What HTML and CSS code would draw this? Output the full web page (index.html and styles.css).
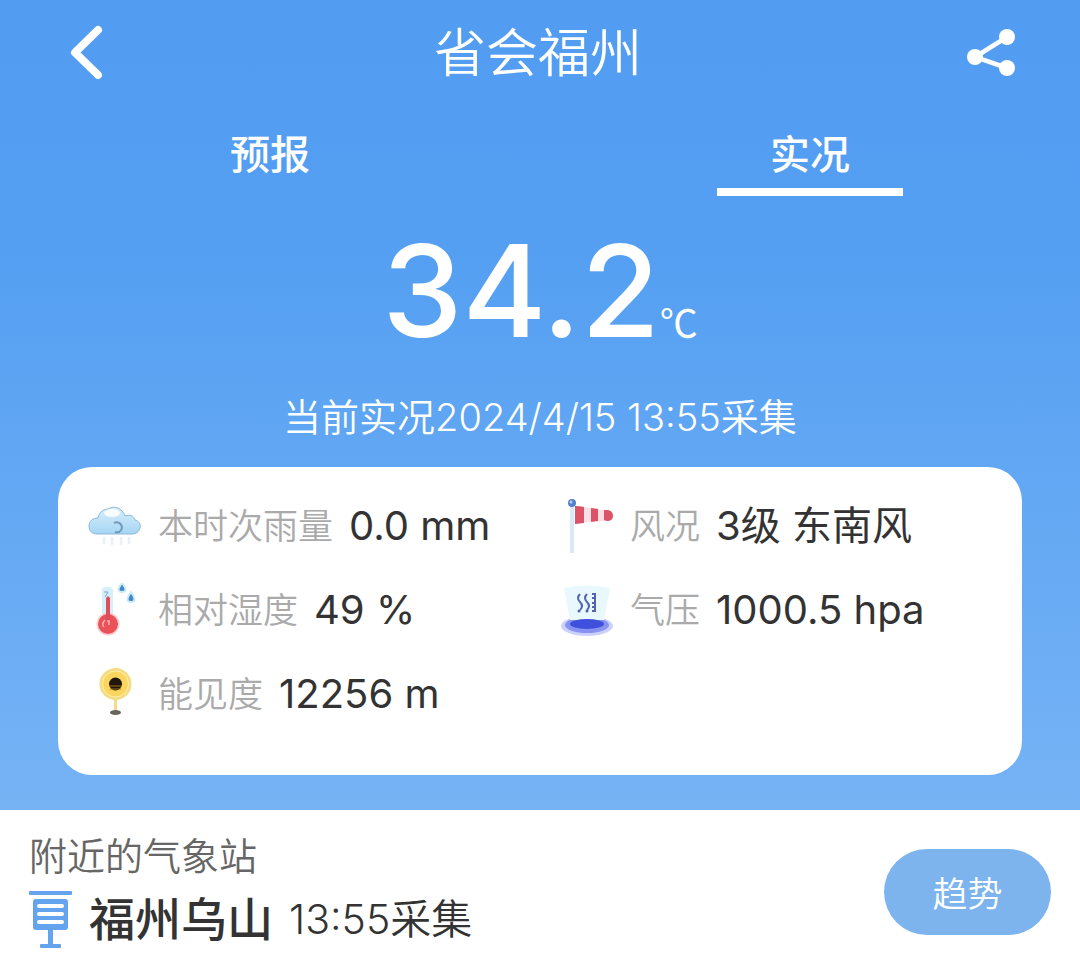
FILE: index.html
```html
<!DOCTYPE html>
<html lang="zh-CN">
<head>
<meta charset="utf-8">
<meta name="viewport" content="width=device-width, initial-scale=1">
<title>省会福州</title>
<link rel="stylesheet" href="styles.css">
</head>
<body>
<main class="live">
  <header class="topbar">
    <button class="icon-button" type="button" aria-label="返回">
      <svg width="48" height="64" viewBox="0 0 48 64" fill="none" stroke="#fff" stroke-width="8" stroke-linecap="round" stroke-linejoin="round"><path d="M36 10 13 32.500 36 55"/></svg>
    </button>
    <h1 class="title">省会福州</h1>
    <button class="icon-button" type="button" aria-label="分享">
      <svg width="52" height="52" viewBox="0 0 52 52" fill="#fff"><path d="M41 11 9 31 41 42" fill="none" stroke="#fff" stroke-width="4.500"/><circle cx="41" cy="11" r="8"/><circle cx="9" cy="31" r="8"/><circle cx="41" cy="42" r="8"/></svg>
    </button>
  </header>
  <nav class="tabs">
    <a class="tab" href="#forecast">预报</a>
    <a class="tab tab-active" href="#live" aria-current="page">实况</a>
  </nav>
  <p class="temperature"><span class="degrees">34.2</span><span class="unit">℃</span></p>
  <p class="collected">当前实况2024/4/15 13:55采集</p>
  <dl class="card">
    <div class="metric">
      <svg class="metric-icon" viewBox="0 0 54 54" width="54" height="54">
        <defs><linearGradient id="cloud" x1="0" y1="0" x2="0" y2="1"><stop offset="0" stop-color="#d9effb"/><stop offset="1" stop-color="#a5d5f4"/></linearGradient></defs>
        <path d="M9 35c-5 0-8-3-8-8 0-5 4-8 9-8 1-6 6-9 10-9 7-4 14-1 17 7 5-2 9 0 10 4 4 1 6 4 5 8-1 4-4 6-8 6z" fill="url(#cloud)" stroke="#8fb8d5" stroke-width="1"/>
        <ellipse cx="24" cy="14" rx="8" ry="4" fill="#fff" opacity=".85"/>
        <path d="M26 24c3-2 8 0 8 5-1 4-4 5-7 4" fill="none" stroke="#7599b9" stroke-width="2"/>
        <path d="M16 38v7M24 38v8M33 38v8M41 38v7" stroke="#e7f2f8" stroke-width="2.500"/>
      </svg>
      <dt>本时次雨量</dt><dd>0.0 mm</dd>
    </div>
    <div class="metric">
      <svg class="metric-icon" viewBox="0 0 54 54" width="54" height="54">
        <path d="M10 6h4v48h-4z" fill="#dce8f7"/>
        <path d="M15 7q20 2 33 5 5 1 5 5t-6 5q-18 0-32 3z" fill="#f9e0e5"/>
        <path d="M15 7q5 0 9 1v16l-9 1zM31 9l7 1v12l-7 1zM44 11h4q5 1 5 6t-6 5l-3-1z" fill="#dc5267"/>
        <circle cx="12" cy="4" r="4" fill="#5482c8"/><circle cx="11" cy="3" r="1.500" fill="#b8d6f6"/>
      </svg>
      <dt>风况</dt><dd>3级 东南风</dd>
    </div>
    <div class="metric">
      <svg class="metric-icon" viewBox="0 0 54 54" width="54" height="54">
        <path d="M14 34V8q0-4 4-4h3q4 0 4 4v26z" fill="#d5effb"/>
        <path d="M16 9h4l-3 5" fill="none" stroke="#7da9cb" stroke-width="1"/>
        <circle cx="20" cy="41" r="11.500" fill="#fbd2d3"/><circle cx="20" cy="41" r="10" fill="#ea5158"/>
        <path d="M18 39V15l2-2 2 2v24z" fill="#dd4d5c"/>
        <path d="M17 37q-4 4-1 7M19 38h2v4" fill="none" stroke="#ffb0a8" stroke-width="1.500"/>
        <path d="M34 0q7 9 0 9t0-9zM43 9q7 10 0 10t0-10z" fill="#4189c9" stroke="#cceafa" stroke-width="2"/>
      </svg>
      <dt>相对湿度</dt><dd>49 %</dd>
    </div>
    <div class="metric">
      <svg class="metric-icon" viewBox="0 0 54 54" width="54" height="54">
        <ellipse cx="27" cy="43" rx="26" ry="10" fill="#cbd1fa"/><ellipse cx="27" cy="42" rx="22" ry="8" fill="#8793ef"/>
        <path d="M4 5q23-5 46 0L44 37H10z" fill="#e8f8fd"/>
        <ellipse cx="27" cy="41" rx="17" ry="5" fill="#3f51dc"/>
        <path d="M20 11q-4 4 0 8t0 8M27 11q-4 4 0 8t0 8M32 11h3v17h-3M32 15h3M32 20h3M32 24h3" fill="none" stroke="#5364ae" stroke-width="2"/>
        <circle cx="19" cy="28" r="1.500" fill="#5364ae"/><circle cx="27" cy="28" r="1.500" fill="#5364ae"/>
      </svg>
      <dt>气压</dt><dd>1000.5 hpa</dd>
    </div>
    <div class="metric">
      <svg class="metric-icon" viewBox="0 0 54 54" width="54" height="54">
        <path d="M26 30h3v16h-3z" fill="#f3dc8a"/>
        <circle cx="27.500" cy="17" r="16" fill="#f4dc83"/><circle cx="27.500" cy="17" r="13" fill="#fbd65e" stroke="#fff0ae"/>
        <circle cx="27.500" cy="17" r="6.500" fill="#201609"/><path d="M21 19h13M22 22h11" stroke="#9b7325" stroke-width="1"/>
        <ellipse cx="27.500" cy="45.500" rx="5.500" ry="2.500" fill="#66645c"/>
      </svg>
      <dt>能见度</dt><dd>12256 m</dd>
    </div>
  </dl>
</main>
<section class="station">
  <div class="station-info">
    <h2 class="station-heading">附近的气象站</h2>
    <div class="station-row">
      <svg width="44" height="60" viewBox="0 0 44 60" fill="#64a3ed"><rect y="2" width="43" height="4" rx="1"/><rect x="4" y="10" width="35" height="31" rx="3"/><path d="M19 40h5v16h-5z"/><rect x="11" y="55" width="21" height="4" rx="1"/><path d="M10 17h23M10 25h23M10 33h23" stroke="#fff" stroke-width="4" stroke-linecap="round"/></svg>
      <strong class="station-name">福州乌山</strong>
      <span class="station-time">13:55采集</span>
    </div>
  </div>
  <button class="trend" type="button">趋势</button>
</section>
</body>
</html>
```
FILE: styles.css
```css
* { box-sizing: border-box; }
body {
  margin: 0;
  background: #fff;
  color: #333;
  font-family: Inter, "Noto Sans CJK SC", sans-serif;
}
h1, h2, p, dl, dd { margin: 0; }
button { border: 0; padding: 0; font-family: inherit; cursor: pointer; }
svg { display: block; flex: none; }
.live {
  padding-bottom: 35px;
  background: linear-gradient(#529df2, #549ff2 30%, #76b3f5);
  color: #fff;
}
.topbar {
  display: flex;
  align-items: center;
  justify-content: space-between;
  height: 104px;
  padding: 0 62px;
}
.icon-button { background: none; }
.title { padding-top: 4px; font-size: 52px; font-weight: 350; line-height: 64px; }
.tabs { display: grid; grid-template-columns: 1fr 1fr; justify-items: center; }
.tab {
  width: 186px;
  height: 92px;
  border-bottom: 8px solid transparent;
  color: #fff;
  font-size: 40px;
  font-weight: 500;
  line-height: 102px;
  text-align: center;
  text-decoration: none;
}
.tab-active { border-color: #fff; }
.temperature {
  display: flex;
  align-items: baseline;
  justify-content: center;
  height: 192px;
  line-height: 190px;
}
.degrees { font-size: 128px; font-weight: 500; }
.unit { font-family: "Noto Sans CJK SC", sans-serif; font-size: 38px; }
.collected { font-size: 38px; font-weight: 350; line-height: 58px; text-align: center; }
.card {
  display: grid;
  grid-template-columns: 472px 1fr;
  grid-auto-rows: 84px;
  align-items: center;
  margin: 21px 58px 0;
  padding: 17px 30px 39px;
  border-radius: 34px;
  background: #fff;
}
.metric { display: flex; align-items: center; gap: 16px; line-height: 60px; white-space: nowrap; }
.metric dt { color: #aaa; font-size: 35px; font-weight: 350; }
.metric dd { color: #333; font-size: 40px; }
.station {
  display: flex;
  align-items: center;
  justify-content: space-between;
  padding: 22px 29px;
}
.station-heading { color: #666; font-size: 38px; font-weight: 350; line-height: 48px; }
.station-row { display: flex; align-items: center; gap: 16px; margin-top: 7px; line-height: 64px; }
.station-name { font-size: 46px; font-weight: 500; }
.station-time { font-size: 41px; font-weight: 350; }
.trend {
  width: 167px;
  height: 86px;
  border-radius: 43px;
  background: #7db4ee;
  color: #fff;
  font-size: 35px;
  font-weight: 350;
}
```
